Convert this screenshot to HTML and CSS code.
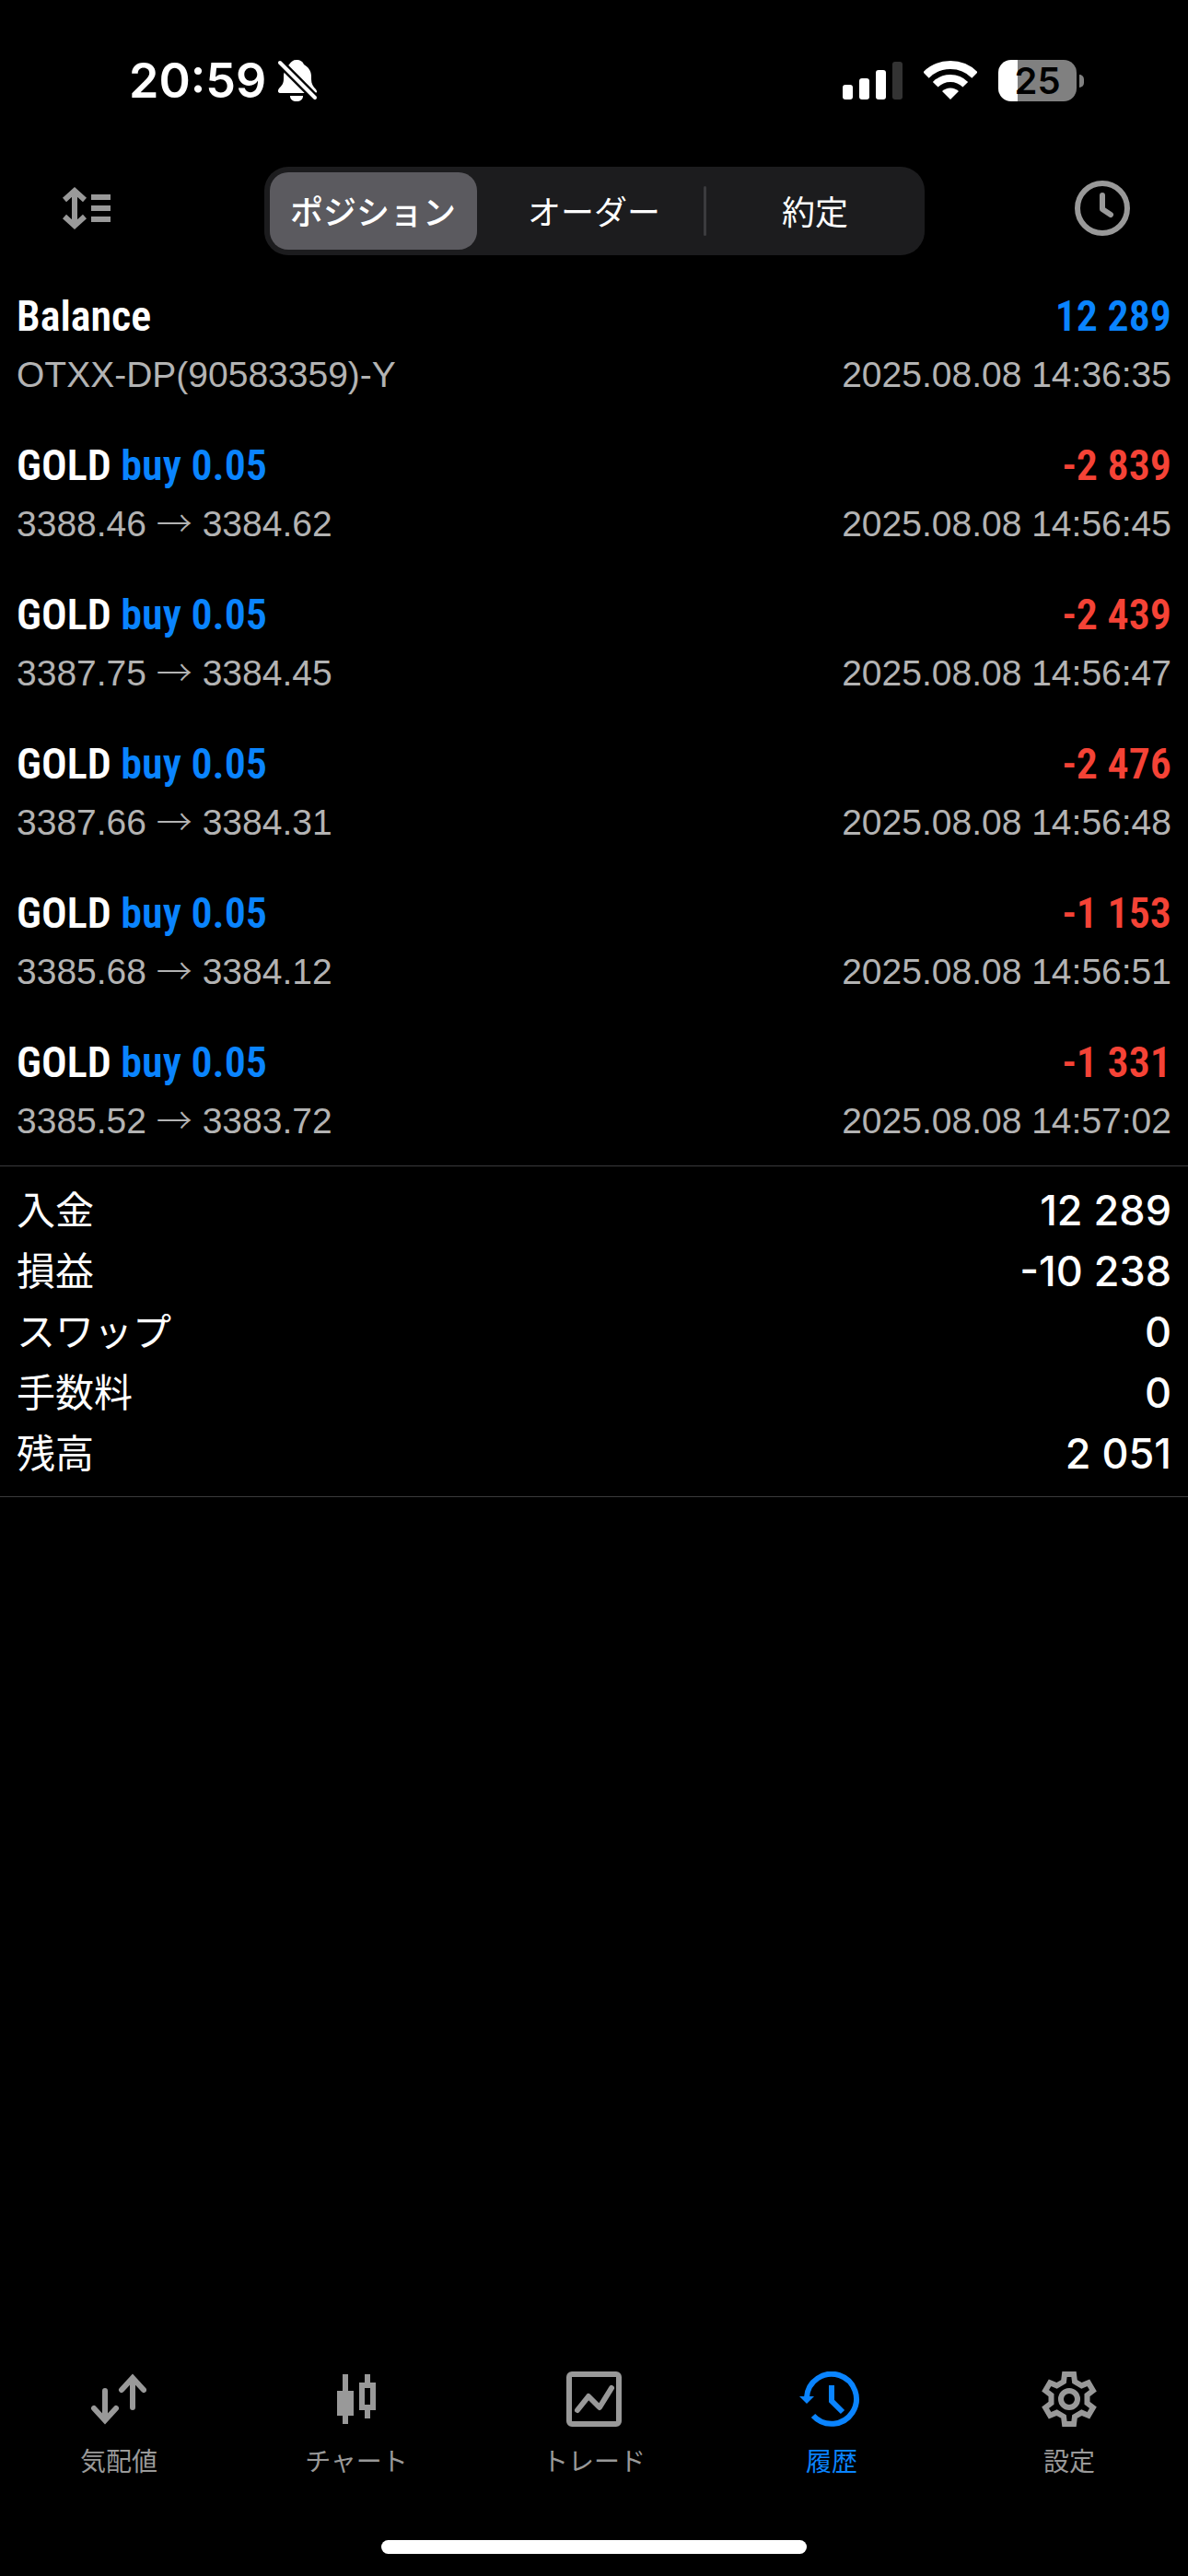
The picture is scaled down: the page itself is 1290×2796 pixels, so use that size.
FILE: index.html
```html
<!DOCTYPE html>
<html lang="ja">
<head>
  <meta charset="utf-8">
  <meta name="viewport" content="width=device-width, initial-scale=1">
  <title>履歴</title>
  <link rel="stylesheet" href="styles.css">
</head>
<body>
  <div class="app">

    <div class="status">
      <div class="status-left">
        <span class="status-time">20:59</span>
        <svg width="44" height="48" viewBox="0 0 44 48">
          <path fill="#fff" d="M21 2C25 2 28 4 29 7C34 10 37 14 37 20V23C37 28 39 31 42 34C44 37 43 38 40 38H4C1 38 0 36 2 33C6 29 7 27 7 22V18C8 13 10 10 13 7C15 4 17 2 21 2Z"/>
          <path fill="#fff" d="M14 41H28C28 45 25 47 21 47S14 45 14 41Z"/>
          <path stroke="#000" stroke-width="9" d="M0 2L44 46"/>
          <path stroke="#fff" stroke-width="4" stroke-linecap="round" d="M3 5L41 43"/>
        </svg>
      </div>
      <div class="status-right">
        <svg width="65" height="43" viewBox="0 0 65 43" fill="#fff">
          <rect x="0" y="26" width="11" height="16" rx="3"/>
          <rect x="18" y="19" width="11" height="23" rx="3"/>
          <rect x="36" y="10" width="11" height="32" rx="3"/>
          <rect x="54" y="1" width="11" height="41" rx="3" fill="#333"/>
        </svg>
        <svg width="58" height="43" viewBox="0 0 58 43" fill="none" stroke="#fff">
          <path stroke-width="9" d="M2.5 15.5A37.5 37.5 0 0 1 55.5 15.5"/>
          <path stroke-width="8" d="M12.7 25.7A23 23 0 0 1 45.3 25.7"/>
          <path fill="#fff" stroke="none" d="M29 42L20 33A13 13 0 0 1 38 33Z"/>
        </svg>
        <div class="battery"><span>25</span></div>
      </div>
    </div>

    <header class="toolbar">
      <button class="tool" aria-label="並べ替え">
        <svg width="57" height="60" viewBox="-5 0 57 60">
          <path fill="none" stroke="#999" stroke-width="6" d="M13 11V49M2 21L13 11L24 21M2 39L13 49L24 39"/>
          <path fill="#999" d="M31 15H52V21H31ZM31 27H52V33H31ZM31 39H52V45H31Z"/>
        </svg>
      </button>
      <div class="segments" role="tablist">
        <button class="segment active" role="tab" aria-selected="true">ポジション</button>
        <button class="segment" role="tab" aria-selected="false">オーダー</button>
        <button class="segment divided" role="tab" aria-selected="false">約定</button>
      </div>
      <button class="tool" aria-label="期間">
        <svg width="60" height="60" viewBox="0 0 60 60" fill="none" stroke="#999" stroke-width="6" stroke-linecap="round" stroke-linejoin="round">
          <circle cx="30" cy="30" r="27"/>
          <path d="M30 16V31L39 37"/>
        </svg>
      </button>
    </header>

    <main>
      <ul class="deals">
        <li class="deal">
          <div class="deal-main"><span>Balance</span><span class="plus">12 289</span></div>
          <div class="deal-sub"><span>OTXX-DP(90583359)-Y</span><time>2025.08.08 14:36:35</time></div>
        </li>
        <li class="deal">
          <div class="deal-main"><span>GOLD <span class="buy">buy 0.05</span></span><span class="minus">-2 839</span></div>
          <div class="deal-sub"><span>3388.46 <span class="arrow">→</span> 3384.62</span><time>2025.08.08 14:56:45</time></div>
        </li>
        <li class="deal">
          <div class="deal-main"><span>GOLD <span class="buy">buy 0.05</span></span><span class="minus">-2 439</span></div>
          <div class="deal-sub"><span>3387.75 <span class="arrow">→</span> 3384.45</span><time>2025.08.08 14:56:47</time></div>
        </li>
        <li class="deal">
          <div class="deal-main"><span>GOLD <span class="buy">buy 0.05</span></span><span class="minus">-2 476</span></div>
          <div class="deal-sub"><span>3387.66 <span class="arrow">→</span> 3384.31</span><time>2025.08.08 14:56:48</time></div>
        </li>
        <li class="deal">
          <div class="deal-main"><span>GOLD <span class="buy">buy 0.05</span></span><span class="minus">-1 153</span></div>
          <div class="deal-sub"><span>3385.68 <span class="arrow">→</span> 3384.12</span><time>2025.08.08 14:56:51</time></div>
        </li>
        <li class="deal">
          <div class="deal-main"><span>GOLD <span class="buy">buy 0.05</span></span><span class="minus">-1 331</span></div>
          <div class="deal-sub"><span>3385.52 <span class="arrow">→</span> 3383.72</span><time>2025.08.08 14:57:02</time></div>
        </li>
      </ul>

      <dl class="summary">
        <div><dt>入金</dt><dd>12 289</dd></div>
        <div><dt>損益</dt><dd>-10 238</dd></div>
        <div><dt>スワップ</dt><dd>0</dd></div>
        <div><dt>手数料</dt><dd>0</dd></div>
        <div><dt>残高</dt><dd>2 051</dd></div>
      </dl>
    </main>

    <nav class="tabbar">
      <a href="#quotes">
        <svg width="60" height="60" viewBox="0 0 60 60" fill="none" stroke="currentColor" stroke-width="6" stroke-linecap="round">
          <path d="M15 21V51M3 40L15 53L27 40M45 39V9M33 20L45 7L57 20"/>
        </svg>
        <span>気配値</span>
      </a>
      <a href="#chart">
        <svg width="60" height="60" viewBox="0 0 60 60" fill="currentColor">
          <path d="M15 3H21V21H27V48H21V57H15V48H9V21H15Z"/>
          <path fill-rule="evenodd" d="M39 3H45V12H51V42H45V51H39V42H33V12H39ZM39 18V36H45V18Z"/>
        </svg>
        <span>チャート</span>
      </a>
      <a href="#trade">
        <svg width="60" height="60" viewBox="0 0 60 60" fill="none" stroke="currentColor" stroke-width="6" stroke-linecap="round" stroke-linejoin="round">
          <rect x="3" y="3" width="54" height="54" rx="3"/>
          <path d="M12 42L24 27L36 39L49 18"/>
        </svg>
        <span>トレード</span>
      </a>
      <a href="#history" class="current" aria-current="page">
        <svg width="72" height="60" viewBox="0 0 72 60" fill="none" stroke="currentColor" stroke-width="6">
          <path d="M9 28A27 27 0 1 1 16 48"/>
          <path d="M36 15V32L48 44"/>
          <path fill="currentColor" stroke="none" d="M1 27H17L9 35Z"/>
        </svg>
        <span>履歴</span>
      </a>
      <a href="#settings">
        <svg width="60" height="60" viewBox="0 0 60 60" fill="none" stroke="currentColor" stroke-width="6">
          <path d="M24 11L25 3H35L36 11L43.500 15.300L50.900 12.200L55.900 20.800L49.500 25.700V34.300L55.900 39.200L50.900 47.800L43.500 44.700L36 49L35 57H25L24 49L16.500 44.700L9.100 47.800L4.100 39.200L10.500 34.300V25.700L4.100 20.800L9.100 12.200L16.500 15.300Z"/>
          <circle cx="30" cy="30" r="9"/>
        </svg>
        <span>設定</span>
      </a>
    </nav>
    <div class="home-bar"></div>
  </div>
</body>
</html>
```
FILE: styles.css
```css
* {
  box-sizing: border-box;
}

body {
  margin: 0;
  background-color: #000;
  color: #fff;
  font-family: Inter, "Noto Sans CJK JP", sans-serif;
}

button {
  margin: 0;
  padding: 0;
  border: 0;
  background: none;
  color: inherit;
  font: inherit;
}

svg {
  display: block;
}

.app {
  min-height: 100vh;
  display: flex;
  flex-direction: column;
}

/* Status bar */

.status {
  height: 175px;
  padding: 52px 121px 0 140px;
  display: flex;
  justify-content: space-between;
  align-items: flex-start;
}

.status-left, .status-right {
  height: 70px;
  display: flex;
  align-items: center;
}

.status-left {
  gap: 12px;
}

.status-right {
  gap: 23px;
}

.status-time {
  padding-top: 2px;
  font-size: 52px;
  line-height: 70px;
  font-weight: 600;
}

.battery {
  position: relative;
  width: 85px;
  height: 45px;
  border-radius: 14px;
  background: linear-gradient(to right, #fff 25%, #808080 25%);
  color: #000;
  font-size: 40px;
  line-height: 45px;
  font-weight: 600;
  text-align: center;
}

.battery:after {
  content: '';
  position: absolute;
  left: 88px;
  top: 16px;
  width: 5px;
  height: 14px;
  border-radius: 0 5px 5px 0;
  background-color: #808080;
}

/* Toolbar */

.toolbar {
  padding: 6px 63px 16px;
  display: grid;
  grid-template-columns: 1fr minmax(0, 717px) 1fr;
  align-items: center;
}

.tool {
  padding-bottom: 6px;
}

.tool:last-child {
  justify-self: end;
}

.tool:first-child {
  justify-self: start;
}

.segments {
  height: 96px;
  padding: 6px;
  display: grid;
  grid-template-columns: repeat(3, 1fr);
  gap: 15px;
  border-radius: 26px;
  background-color: #1c1c1e;
}

.segment {
  position: relative;
  padding-bottom: 2px;
  border-radius: 20px;
  font-size: 36px;
}

.segment.active {
  background-color: #5b5a5f;
  font-weight: 500;
}

.segment.divided:before {
  content: '';
  position: absolute;
  left: -9px;
  top: 15px;
  width: 3px;
  height: 54px;
  border-radius: 2px;
  background-color: #3b3b3e;
}

/* Deals */

.deals {
  margin: 0;
  padding: 0;
  list-style-type: none;
}

.deal {
  padding: 17px 18px;
}

.deal-main, .deal-sub {
  display: flex;
  justify-content: space-between;
}

.deal-main {
  font-family: "Avenir Next Condensed", "Roboto Condensed", "Liberation Sans Narrow", "Open Sans", sans-serif;
  font-size: 46px;
  line-height: 66px;
  font-weight: 600;
}

.deal-sub {
  color: #b3b3b3;
  font-family: "Liberation Sans", "Noto Sans CJK JP", sans-serif;
  font-size: 39px;
  line-height: 62px;
}

.arrow {
  font-family: "Noto Sans CJK JP", sans-serif;
  font-weight: 300;
  line-height: 1;
}

.plus, .buy {
  color: #0a84ff;
}

.minus {
  color: #f54336;
}

/* Summary */

.summary {
  margin: 0;
  padding: 15px 18px 13px;
  border-top: 1px solid #3a3a3c;
  border-bottom: 1px solid #3a3a3c;
}

.summary div {
  display: flex;
  justify-content: space-between;
  line-height: 66px;
}

.summary dt {
  font-size: 42px;
}

.summary dd {
  margin: 0;
  font-size: 45px;
  font-weight: 500;
}

/* Tab bar */

.tabbar {
  margin-top: auto;
  display: grid;
  grid-template-columns: repeat(5, 1fr);
}

.tabbar a {
  display: flex;
  flex-direction: column;
  align-items: center;
  gap: 18px;
  color: #999;
  font-size: 28px;
  line-height: 40px;
  text-decoration: none;
}

.tabbar a.current {
  color: #0a84ff;
}

.home-bar {
  width: 462px;
  height: 15px;
  margin: 65px auto 24px;
  border-radius: 8px;
  background-color: #fff;
}
```
